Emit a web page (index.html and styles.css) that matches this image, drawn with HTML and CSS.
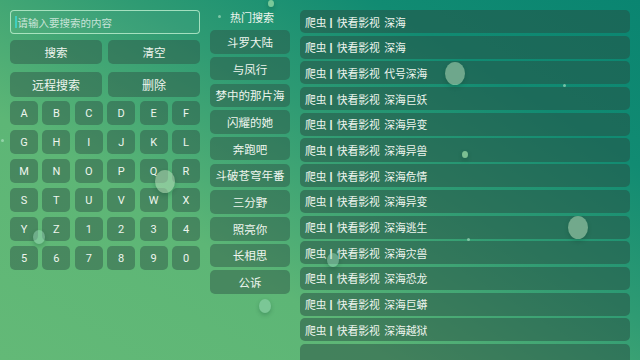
FILE: index.html
```html
<!DOCTYPE html>
<html lang="zh-CN">
<head>
    <meta charset="UTF-8">
    <meta name="viewport" content="width=device-width, initial-scale=1.0">
    <title>搜索</title>
    <link rel="stylesheet" href="styles.css">
</head>
<body>
<div class="search-page">
    <div class="left-panel">
        <div class="search-input"><span class="caret"></span>请输入要搜索的内容</div>
        <div class="action-row">
            <div class="btn">搜索</div>
            <div class="btn">清空</div>
        </div>
        <div class="action-row second">
            <div class="btn">远程搜索</div>
            <div class="btn">删除</div>
        </div>
        <div class="keyboard" id="keyboard">
            <!-- keys filled by script -->
        </div>
    </div>
    <div class="hot-panel">
        <div class="hot-title"><span class="dot"></span>热门搜索</div>
        <div class="hot-item">斗罗大陆</div>
        <div class="hot-item">与凤行</div>
        <div class="hot-item">梦中的那片海</div>
        <div class="hot-item">闪耀的她</div>
        <div class="hot-item">奔跑吧</div>
        <div class="hot-item">斗破苍穹年番</div>
        <div class="hot-item">三分野</div>
        <div class="hot-item">照亮你</div>
        <div class="hot-item">长相思</div>
        <div class="hot-item">公诉</div>
    </div>
    <div class="result-list" id="results">
        <!-- rows filled by script -->
    </div>

    <!-- floating bubbles -->
    <span class="bubble big" style="left:445px; top:62px;"></span>
    <span class="bubble big" style="left:568px; top:216px;"></span>
    <span class="bubble big" style="left:155px; top:170px;"></span>
    <span class="bubble mid" style="left:259px; top:299px;"></span>
    <span class="bubble mid" style="left:33px; top:230px;"></span>
    <span class="bubble mid" style="left:327px; top:253px;"></span>
    <span class="bubble small" style="left:268px; top:0px;"></span>
    <span class="bubble small" style="left:462px; top:151px;"></span>
    <span class="bubble tiny" style="left:563px; top:84px;"></span>
    <span class="bubble tiny" style="left:467px; top:238px;"></span>
    <span class="bubble tiny" style="left:1px; top:139px;"></span>
    <span class="bubble tiny" style="left:218px; top:15px;"></span>
</div>
<script>
    const keys = 'ABCDEFGHIJKLMNOPQRSTUVWXYZ1234567890'.split('');
    const keyboard = document.getElementById('keyboard');
    keys.forEach(k => {
        const key = document.createElement('div');
        key.className = 'key';
        key.textContent = k;
        keyboard.appendChild(key);
    });

    const titles = ['深海', '深海', '代号深海', '深海巨妖', '深海异变', '深海异兽', '深海危情',
        '深海异变', '深海逃生', '深海灾兽', '深海恐龙', '深海巨蟒', '深海越狱'];
    const results = document.getElementById('results');
    titles.forEach(t => {
        const row = document.createElement('div');
        row.className = 'result-item';
        row.innerHTML = '爬虫<span class="sep">|</span>快看影视 <span class="title">' + t + '</span>';
        results.appendChild(row);
    });
    // last row only peeks in at the bottom edge
    const tail = document.createElement('div');
    tail.className = 'result-item';
    results.appendChild(tail);
</script>
</body>
</html>
```
FILE: styles.css
```css
html, body {
    margin: 0;
    padding: 0;
    width: 640px;
    height: 360px;
    overflow: hidden;
}
body {
    font-family: "Noto Sans CJK SC", "Noto Sans", sans-serif;
    color: #eef5ee;
    background: linear-gradient(32deg, #63b977 0%, #5db676 32%, #2f9b73 58%, #118b72 78%, #0a8571 100%);
}
.search-page {
    position: relative;
    display: flex;
    height: 360px;
    padding: 10px;
    box-sizing: border-box;
    gap: 10px;
}
.left-panel {
    width: 190px;
    flex: none;
}
.search-input {
    height: 24px;
    border: 1px solid rgba(200, 245, 215, 0.75);
    border-radius: 4px;
    box-sizing: border-box;
    display: flex;
    align-items: center;
    padding-left: 4px;
    font-size: 10.5px;
    color: rgba(235, 245, 240, 0.8);
    background: rgba(255, 255, 255, 0.04);
}
.caret {
    width: 1.5px;
    height: 12px;
    background: #3fd0c0;
    margin-right: 1px;
}
.action-row {
    display: flex;
    gap: 6px;
    margin-top: 6px;
}
.action-row.second {
    margin-top: 8px;
}
.btn {
    flex: 1;
    height: 24px;
    border-radius: 5px;
    background: rgba(45, 80, 68, 0.45);
    display: flex;
    align-items: center;
    justify-content: center;
    font-size: 11.5px;
}
.action-row.second .btn {
    height: 25px;
    font-size: 12px;
}
.keyboard {
    display: grid;
    grid-template-columns: repeat(6, 1fr);
    column-gap: 4.4px;
    row-gap: 5px;
    margin-top: 4px;
}
.key {
    height: 24px;
    border-radius: 5px;
    background: rgba(45, 80, 68, 0.45);
    display: flex;
    align-items: center;
    justify-content: center;
    font-family: Roboto, "Noto Sans", sans-serif;
    font-size: 11px;
}
.hot-panel {
    width: 80px;
    flex: none;
    display: flex;
    flex-direction: column;
    gap: 3.2px;
    margin-top: -3px;
}
.hot-title {
    height: 20px;
    display: flex;
    align-items: center;
    justify-content: center;
    font-size: 11px;
    padding-left: 4px;
}
.hot-item {
    height: 23.5px;
    border-radius: 5px;
    background: rgba(45, 80, 68, 0.45);
    display: flex;
    align-items: center;
    justify-content: center;
    font-size: 11.5px;
    white-space: nowrap;
}
.result-list {
    width: 330px;
    flex: none;
    display: flex;
    flex-direction: column;
    gap: 2.6px;
}
.result-item {
    flex: none;
    height: 23.1px;
    border-radius: 5px;
    background: rgba(40, 75, 66, 0.5);
    display: flex;
    align-items: center;
    padding-left: 5px;
    font-size: 10.8px;
    white-space: pre;
}
.sep {
    font-weight: bold;
    font-family: "Liberation Sans", sans-serif;
    margin: 0 4px 0 3px;
}
.title {
    margin-left: 2px;
}
.bubble {
    position: absolute;
    border-radius: 50%;
    background: rgba(190, 225, 190, 0.5);
    box-shadow: 0 2px 4px rgba(0, 60, 40, 0.25);
}
.bubble.big {
    width: 20px;
    height: 23px;
}
.bubble.mid {
    width: 12px;
    height: 14px;
    background: rgba(160, 220, 190, 0.45);
}
.bubble.small {
    width: 6px;
    height: 7px;
    background: rgba(160, 225, 170, 0.7);
}
.bubble.tiny {
    width: 3px;
    height: 3px;
    background: rgba(180, 230, 200, 0.6);
    box-shadow: none;
}
```
